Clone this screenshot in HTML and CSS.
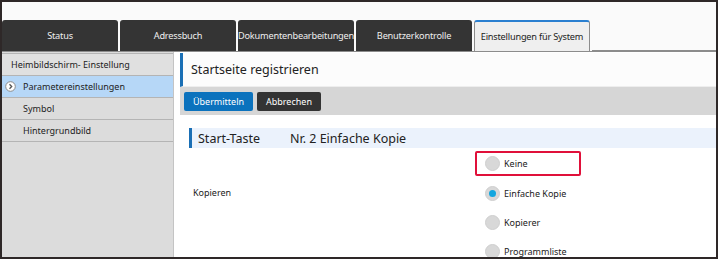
FILE: index.html
```html
<!DOCTYPE html>
<html lang="de">

<head>
    <meta charset="UTF-8">
    <meta name="viewport" content="width=device-width, initial-scale=1.0">
    <link rel="stylesheet" href="styles.css">
</head>

<body>
    <div class="frame">
        <div class="top-strip"></div>
        <div class="tabs">
            <div class="tab">Status</div>
            <div class="tab">Adressbuch</div>
            <div class="tab">Dokumentenbearbeitungen</div>
            <div class="tab">Benutzerkontrolle</div>
            <div class="tab tab-active">Einstellungen für System</div>
            <div class="tab-rest"></div>
        </div>
        <div class="body-row">
            <div class="sidebar">
                <ul class="side-menu">
                    <li class="side-head">Heimbildschirm- Einstellung</li>
                    <li class="side-item side-selected">
                        <svg class="side-icon" width="11" height="11" viewBox="0 0 11 11">
                            <circle cx="5.5" cy="5.5" r="4.8" fill="#fff" stroke="#8a8a8a" stroke-width="1"/>
                            <path d="M4.5 3.2 L6.7 5.5 L4.5 7.8" fill="none" stroke="#555" stroke-width="1.3"/>
                        </svg>
                        Parametereinstellungen
                    </li>
                    <li class="side-item">Symbol</li>
                    <li class="side-item">Hintergrundbild</li>
                </ul>
            </div>
            <div class="main">
                <div class="page-title">Startseite registrieren</div>
                <div class="action-bar">
                    <button class="btn btn-primary">Übermitteln</button>
                    <button class="btn btn-dark">Abbrechen</button>
                </div>
                <div class="section-head">
                    <span class="section-name">Start-Taste</span>
                    <span class="section-value">Nr. 2 Einfache Kopie</span>
                </div>
                <div class="form-row">
                    <div class="form-label">Kopieren</div>
                    <div class="radio-list">
                        <label class="radio radio-marked"><span class="radio-dot"></span>Keine</label>
                        <label class="radio"><span class="radio-dot radio-on"></span>Einfache Kopie</label>
                        <label class="radio"><span class="radio-dot"></span>Kopierer</label>
                        <label class="radio"><span class="radio-dot"></span>Programmliste</label>
                    </div>
                </div>
            </div>
        </div>
    </div>
</body>

</html>
```

FILE: styles.css
```css
body {
    margin: 0;
    background: #ffffff;
    font-family: 'Noto Sans', 'Open Sans', sans-serif;
}

.frame {
    width: 718px;
    height: 259px;
    box-sizing: border-box;
    border: 2px solid #2e2828;
    background: #fafafa;
    display: flex;
    flex-direction: column;
    overflow: hidden;
}

.top-strip {
    height: 18px;
    flex: none;
}

.tabs {
    display: flex;
    gap: 2px;
    height: 31px;
    flex: none;
}

.tab {
    width: 116px;
    flex: none;
    box-sizing: border-box;
    background: #343434;
    color: #eeeeee;
    font-size: 9.2px;
    letter-spacing: -0.2px;
    display: flex;
    align-items: center;
    justify-content: center;
    border-radius: 3px 3px 0 0;
    white-space: nowrap;
}

.tab-active {
    background: #efefef;
    color: #222222;
    border: 1px solid #8c8c8c;
    border-top: 2px solid #2a7fd0;
    border-bottom: none;
}

.tab-rest {
    flex: 1;
    border-bottom: 1px solid #8c8c8c;
}

.body-row {
    flex: 1;
    min-height: 0;
    display: flex;
    border-top: 1px solid #8c8c8c;
    background: #ffffff;
}

.sidebar {
    width: 171px;
    flex: none;
    background: #dcdcdc;
    border-right: 1px solid #c4c4c4;
    padding-top: 1px;
}

.side-menu {
    list-style: none;
    margin: 0;
    padding: 0;
    border-top: 1px solid #b4b4b4;
}

.side-menu li {
    height: 21px;
    border-bottom: 1px solid #b4b4b4;
    font-size: 9px;
    color: #222222;
    display: flex;
    align-items: center;
}

.side-head {
    padding-left: 9px;
    background: #e0e0e0;
}

.side-item {
    padding-left: 21px;
    position: relative;
}

.side-selected {
    background: #b6d7f7;
}

.side-icon {
    position: absolute;
    left: 3px;
    top: 5px;
}

.main {
    flex: 1;
    padding: 1px 0 0 6px;
    overflow: hidden;
}

.page-title {
    height: 34px;
    box-sizing: border-box;
    border-left: 3px solid #1a6fb5;
    background: #fcfcfc;
    border-bottom: 1px solid #eeeeee;
    font-size: 12.5px;
    color: #222222;
    padding-left: 8px;
    display: flex;
    align-items: center;
}

.action-bar {
    height: 28px;
    background: #d6d6d6;
    display: flex;
    align-items: center;
    gap: 4px;
    padding-left: 4px;
}

.btn {
    height: 19px;
    font-family: 'Noto Sans', 'Open Sans', sans-serif;
    font-size: 9px;
    border: none;
    border-radius: 2px;
    color: #ffffff;
    padding: 0;
}

.btn-primary {
    width: 69px;
    background: #0b72bd;
}

.btn-dark {
    width: 64px;
    background: #333333;
}

.section-head {
    margin: 13px 0 0 9px;
    height: 20px;
    border-left: 3px solid #1a6fb5;
    background: #ebf2fc;
    display: flex;
    align-items: center;
    font-size: 12.5px;
    color: #222222;
}

.section-name {
    width: 92px;
    padding-left: 6px;
}

.form-row {
    display: flex;
    align-items: flex-start;
    margin-top: 3px;
}

.form-label {
    width: 295px;
    box-sizing: border-box;
    padding: 35px 0 0 13px;
    font-size: 9px;
    color: #222222;
}

.radio-list {
    display: flex;
    flex-direction: column;
}

.radio {
    height: 29px;
    display: flex;
    align-items: center;
    font-size: 9px;
    color: #222222;
    box-sizing: border-box;
    padding-left: 10px;
}

.radio-marked {
    width: 106px;
    height: 25px;
    margin: 0 0 3px 0;
    border: 2px solid #e0103a;
    border-radius: 2px;
    padding-left: 8px;
}

.radio-dot {
    width: 15px;
    height: 15px;
    box-sizing: border-box;
    border-radius: 50%;
    background: #d8d8d8;
    border: 1px solid #cfcfcf;
    margin-right: 4px;
    display: flex;
    align-items: center;
    justify-content: center;
}

.radio-on::after {
    content: "";
    width: 7px;
    height: 7px;
    border-radius: 50%;
    background: #12a6df;
}
```
